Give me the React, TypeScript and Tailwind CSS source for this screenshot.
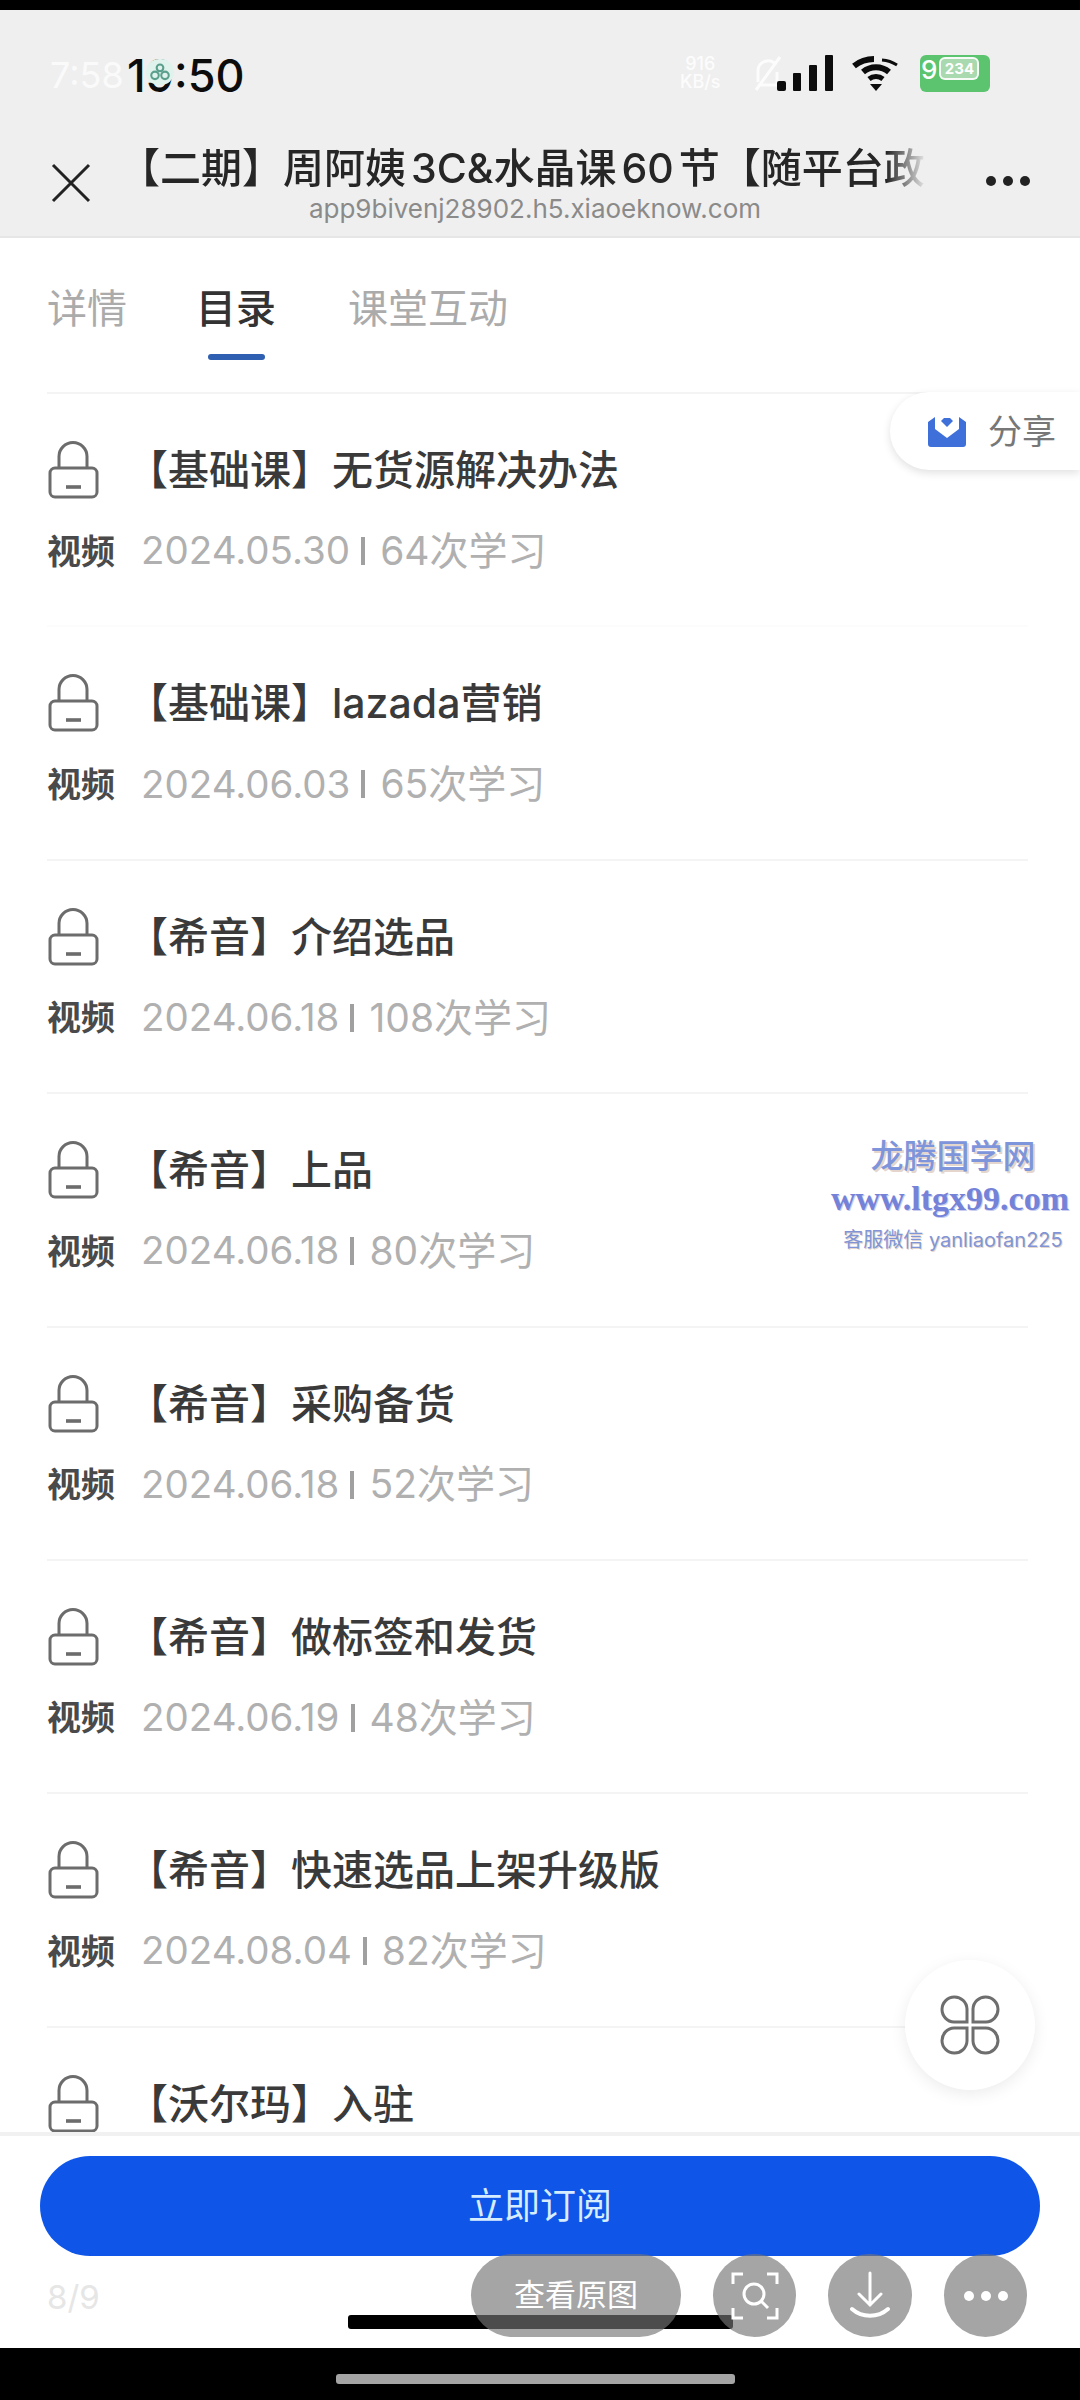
const font = "font-['Inter','Noto_Sans_CJK_SC',sans-serif]";

const rows = [
  { title: "【基础课】无货源解决办法", date: "2024.05.30", count: "64" },
  { title: "【基础课】lazada营销", date: "2024.06.03", count: "65" },
  { title: "【希音】介绍选品", date: "2024.06.18", count: "108" },
  { title: "【希音】上品", date: "2024.06.18", count: "80" },
  { title: "【希音】采购备货", date: "2024.06.18", count: "52" },
  { title: "【希音】做标签和发货", date: "2024.06.19", count: "48" },
  { title: "【希音】快速选品上架升级版", date: "2024.08.04", count: "82" },
  { title: "【沃尔玛】入驻", date: "", count: "" },
];

function Lock() {
  return (
    <svg width="52" height="58" viewBox="0 0 52 58" fill="none" stroke="#6c6c6c" strokeWidth="3" className="shrink-0">
      <rect x="3" y="27" width="47" height="29" rx="5" />
      <path d="M12 27V15.5a14 14 0 0 1 28 0V27" />
      <path d="M19 46h15" strokeWidth="3.6" />
    </svg>
  );
}

function Row({ title, date, count, index }: { title: string; date: string; count: string; index: number }) {
  return (
    <div className={"h-[233.4px] shrink-0 pt-[48px] border-b-2 " + (index === 0 ? "border-[#fcfcfc]" : "border-[#f4f4f4]")}>
      <div className="flex items-center h-[56px]">
        <Lock />
        <div className="ml-[28px] text-[41px] leading-[56px] font-medium text-[#3a3a3a] whitespace-nowrap">{title}</div>
      </div>
      {date && (
        <div className="flex items-center mt-[33px] h-[40px] whitespace-nowrap">
          <span className="text-[34px] font-semibold text-[#4a4a4a] w-[94px]">视频</span>
          <span className="text-[38.5px] text-[#b0b0b0]">{date}</span>
          <span className="w-[4px] h-[28px] bg-[#a0a0a0] ml-[11px] mr-[15px]" />
          <span className="text-[39px] text-[#b0b0b0]">{count}次学习</span>
        </div>
      )}
    </div>
  );
}

function StatusIcons() {
  return (
    <div className="absolute left-[680px] top-[52px] w-[340px] h-[44px]">
      <div className="absolute left-[0px] top-[3px] text-[18px] leading-[18px] font-medium text-white/80 text-center">916<br />KB/s</div>
      <svg className="absolute left-[70px] top-[2px]" width="36" height="38" viewBox="0 0 36 38" fill="none" stroke="#ffffff" strokeOpacity="0.8" strokeWidth="3">
        <path d="M8 28V16a10 10 0 0 1 18-5M27 18v10l4 3H8M30 3 6 36" />
      </svg>
      <svg className="absolute left-[97px] top-[3px]" width="56" height="36" viewBox="0 0 56 36" fill="#0c0c0c">
        <rect x="0" y="26" width="9" height="10" rx="2" />
        <rect x="16" y="18" width="8" height="18" rx="1" />
        <rect x="32" y="10" width="8" height="26" rx="1" />
        <rect x="48" y="0" width="8" height="36" rx="1" />
      </svg>
      <svg className="absolute left-[172px] top-[3px]" width="48" height="36" viewBox="0 0 48 36" fill="none" stroke="#0c0c0c">
        <path d="M2 11a32 32 0 0 1 20-7" strokeWidth="6" />
        <path d="M30 5a32 32 0 0 1 15 5" strokeWidth="3" />
        <path d="M11 17a20 20 0 0 1 26 0" strokeWidth="6" />
        <path d="M17 24a11 11 0 0 1 14 0" strokeWidth="5" />
        <path d="M24 36l-6-7h12z" fill="#0c0c0c" stroke="none" />
      </svg>
      <div className="absolute left-[240px] top-[3px] w-[70px] h-[37px] rounded-[6px] bg-[#5cc46f] flex items-start pt-[2px] pl-[1px] gap-[2px]">
        <span className="text-[26px] leading-[26px] font-medium text-white">9</span>
        <span className="w-[40px] h-[23px] rounded-[6px] border-2 border-white/90 bg-[#a9d9ae] text-[15px] leading-[19px] font-bold text-white text-center">234</span>
      </div>
    </div>
  );
}

export default function App() {
  return (
    <div className={"relative w-[1080px] h-[2400px] overflow-hidden bg-white flex flex-col " + font}>
      <div className="h-[10px] bg-black shrink-0" />

      <header className="relative h-[228px] shrink-0 bg-[#efefef] border-b-2 border-[#e6e6e6]">
        <div className="flex items-center h-[44px] mt-[43px] pl-[50px]">
          <span className="text-[36px] text-white/70 w-[77px]">7:58</span>
          <span className="text-[45px] font-medium text-[#0c0c0c] leading-none">19:50</span>
        </div>
        <div className="flex items-center pl-[48px] pr-[50px] mt-[33px]">
          <svg width="46" height="46" viewBox="0 0 46 46" fill="none" stroke="#222222" strokeWidth="3" className="shrink-0 mt-[30px]">
            <path d="M5 5l36 36M41 5 5 41" />
          </svg>
          <div className="ml-[25px] w-[808px] overflow-hidden whitespace-nowrap text-[41px] leading-[52px] font-medium text-[#262626] [word-spacing:-6px] [mask-image:linear-gradient(to_right,black_95%,transparent_100%)]">
            【二期】周阿姨 3C&amp;水晶课 60 节【随平台政
          </div>
          <div className="ml-auto mt-[25px] flex gap-[7px]">
            <span className="w-[10px] h-[10px] rounded-full bg-[#222222]" />
            <span className="w-[10px] h-[10px] rounded-full bg-[#222222]" />
            <span className="w-[10px] h-[10px] rounded-full bg-[#222222]" />
          </div>
        </div>
        <div className="text-center text-[26px] leading-[26px] text-[#8a8a8a] -mt-[10px] pr-[10px]">app9bivenj28902.h5.xiaoeknow.com</div>
      </header>

      <nav className="h-[154px] shrink-0 px-[47px] flex items-start pt-[45px] text-[40px] leading-[52px] text-[#ababab]">
        <span className="mr-[69px]">详情</span>
        <div className="flex flex-col items-center w-[80px] mr-[72px]">
          <span className="font-medium text-[#333333]">目录</span>
          <span className="w-[57px] h-[6px] mt-[19px] rounded-full bg-[#2f5fb0]" />
        </div>
        <span>课堂互动</span>
      </nav>

      <main className="flex-1 min-h-0 overflow-hidden ml-[47px] mr-[52px] border-t-2 border-[#f4f4f4] flex flex-col">
        {rows.map((r, i) => (
          <Row key={i} index={i} {...r} />
        ))}
      </main>

      <footer className="h-[216px] shrink-0 bg-white border-t-4 border-[#f1f1f1] pt-[20px] px-[40px]">
        <button className="w-[1000px] h-[100px] rounded-full bg-[#0f56e8] text-[36px] text-[#d6ecff] flex items-center justify-center">立即订阅</button>
        <div className="flex items-center h-[84px]">
          <span className="ml-[7px] text-[33px] text-[#e6e6e6]">8/9</span>
        </div>
      </footer>

      <div className="h-[52px] shrink-0 bg-black flex justify-center pt-[26px] pr-[9px]">
        <div className="w-[399px] h-[10px] rounded-[3px] bg-[#a4a4a4]" />
      </div>

      <StatusIcons />
      <div className="absolute left-[146px] top-[59px] w-[28px] h-[26px] rounded-full bg-[#e0f2ec] flex items-center justify-center">
        <svg width="22" height="20" viewBox="0 0 26 24" fill="none" stroke="#5a9e8c" strokeWidth="2.5">
          <circle cx="13" cy="7" r="4" />
          <circle cx="7" cy="16" r="4.5" />
          <circle cx="19" cy="16" r="4.5" />
        </svg>
      </div>

      <div className="absolute right-0 top-[392px] w-[190px] h-[78px] bg-white rounded-l-[39px] shadow-[0_3px_8px_rgba(0,0,0,0.12)] flex items-center pl-[37px]">
        <svg width="40" height="36" viewBox="0 0 40 36" className="-mt-[5px]">
          <path d="M1 11 8 6V1h24v5l7 5v22a3 3 0 0 1-3 3H4a3 3 0 0 1-3-3z" fill="#3f6fd8" />
          <path d="M8 1h24v17l-12 9-12-9z" fill="#ffffff" />
          <path d="M20 16l-6-6 3-3h6l3 3z" fill="#3f6fd8" />
        </svg>
        <span className="ml-[21px] text-[34px] text-[#777777]">分享</span>
      </div>

      <div className="absolute left-[905px] top-[1960px] w-[130px] h-[130px] rounded-full bg-white shadow-[0_4px_16px_rgba(0,0,0,0.08)] flex items-center justify-center">
        <svg width="60" height="60" viewBox="0 0 60 60" fill="none" stroke="#6e6e6e" strokeWidth="3">
          <path d="M27 27H14a12.5 12.5 0 1 1 13-13z" />
          <path d="M33 27h13a12.5 12.5 0 1 0-13-13z" />
          <path d="M27 33H14a12.5 12.5 0 1 0 13 13z" />
          <path d="M33 33h13a12.5 12.5 0 1 1-13 13z" />
        </svg>
      </div>

      <div className="absolute left-[820px] top-[1133px] w-[260px] flex flex-col items-center whitespace-nowrap">
        <div className="ml-[6px] text-[33px] leading-[46px] font-medium text-[#7e95dc] [text-shadow:2px_2px_0_#e4d6cc]">龙腾国学网</div>
        <div className="text-[34px] leading-[40px] font-bold font-['Liberation_Serif',serif] text-[#7482d8] [text-shadow:1px_1px_0_#c9cdf0]">www.ltgx99.com</div>
        <div className="mt-[6px] ml-[6px] text-[20px] leading-[30px] text-[#8195d6] [text-shadow:1px_1px_0_#e4d6cc]">客服微信 yanliaofan225</div>
      </div>

      <div className="absolute left-[348px] top-[2315px] w-[385px] h-[14px] rounded-[3px] bg-black" />
      <div className="absolute left-[471px] top-[2254px] h-[83px] w-[1px] flex items-center gap-[32px]">
        <div className="w-[210px] h-[83px] shrink-0 rounded-full bg-[#757575]/65 flex items-center justify-center text-[31px] text-white">查看原图</div>
        <div className="w-[83px] h-[83px] shrink-0 rounded-full bg-[#757575]/65 flex items-center justify-center">
          <svg width="50" height="50" viewBox="0 0 50 50" fill="none" stroke="#ffffff" strokeWidth="3">
            <path d="M3 13V3h10M37 3h10v10M3 37v10h10M47 37v10H37" />
            <circle cx="24" cy="23" r="10" />
            <path d="M31 30l7 7" />
          </svg>
        </div>
        <div className="w-[84px] h-[83px] shrink-0 rounded-full bg-[#757575]/65 flex items-center justify-center">
          <svg width="40" height="50" viewBox="0 0 40 50" fill="none" stroke="#ffffff" strokeWidth="3" strokeLinecap="round">
            <path d="M20 2v32M9 23l11 11 11-11" />
            <path d="M2 38c10 9 26 9 36 0" strokeWidth="4" />
          </svg>
        </div>
        <div className="w-[83px] h-[83px] shrink-0 rounded-full bg-[#757575]/65 flex items-center justify-center gap-[7px]">
          <span className="w-[10px] h-[10px] rounded-full bg-white" />
          <span className="w-[10px] h-[10px] rounded-full bg-white" />
          <span className="w-[10px] h-[10px] rounded-full bg-white" />
        </div>
      </div>
    </div>
  );
}
